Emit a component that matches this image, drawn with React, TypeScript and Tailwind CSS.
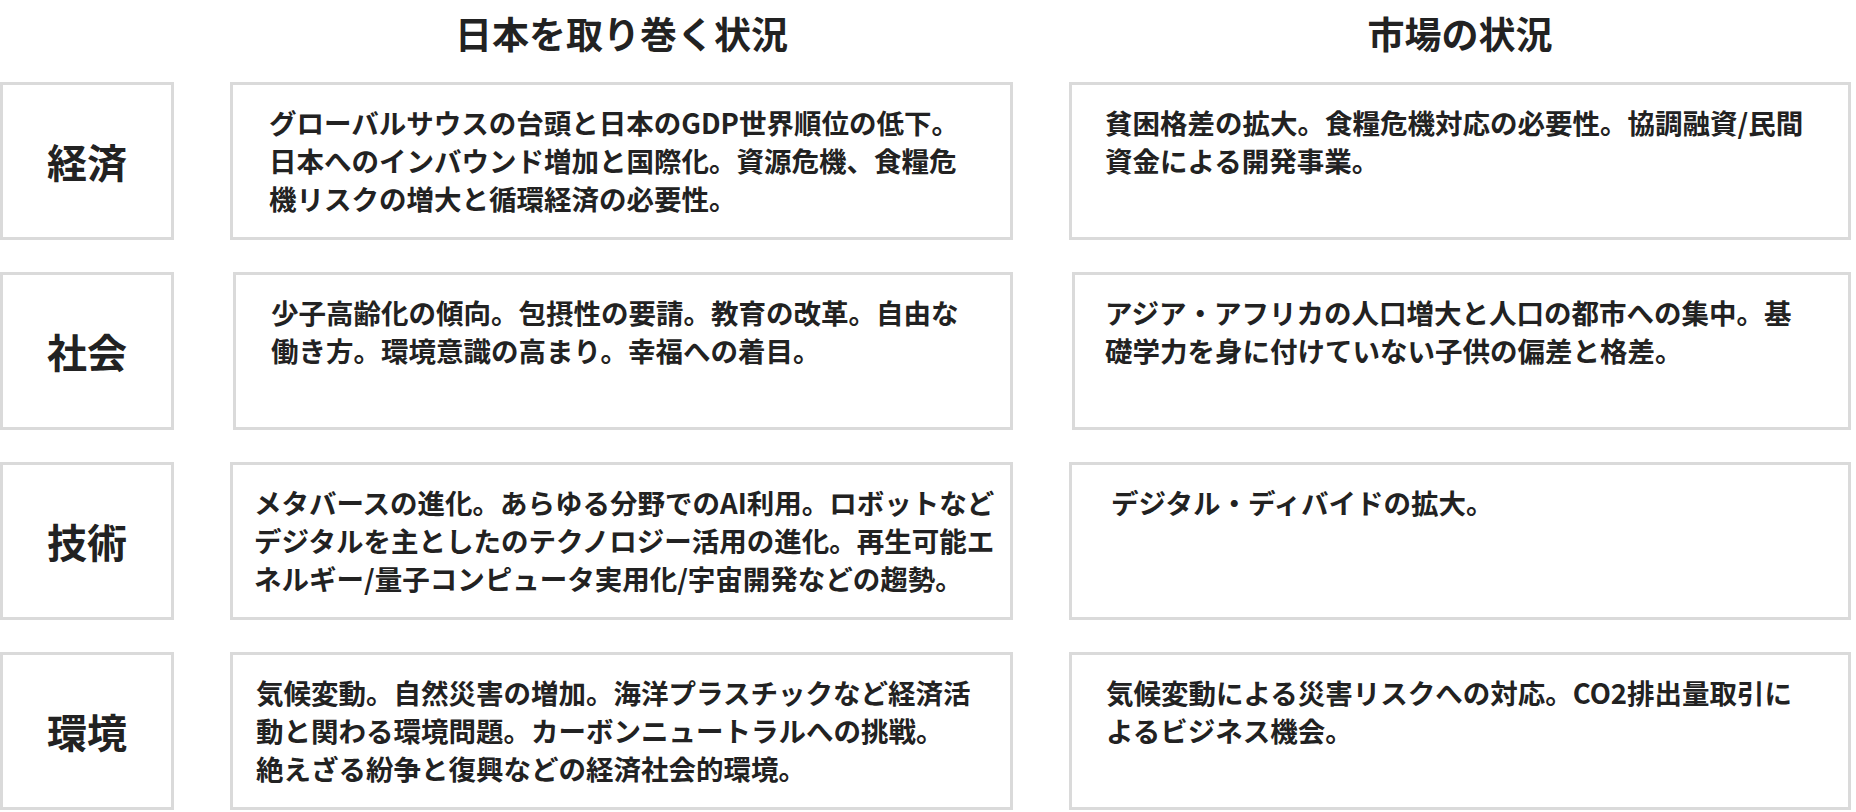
type Cell = {
  lines: string[];
  pad: string;
};

type Row = {
  label: string;
  shift: string;
  japan: Cell;
  market: Cell;
};

const rows: Row[] = [
  {
    label: '経済',
    shift: '',
    japan: {
      lines: [
        'グローバルサウスの台頭と日本のGDP世界順位の低下。',
        '日本へのインバウンド増加と国際化。資源危機、食糧危',
        '機リスクの増大と循環経済の必要性。',
      ],
      pad: 'pl-[36px]',
    },
    market: {
      lines: ['貧困格差の拡大。食糧危機対応の必要性。協調融資/民間', '資金による開発事業。'],
      pad: 'pl-[33px]',
    },
  },
  {
    label: '社会',
    shift: 'ml-[3px]',
    japan: {
      lines: ['少子高齢化の傾向。包摂性の要請。教育の改革。自由な', '働き方。環境意識の高まり。幸福への着目。'],
      pad: 'pl-[35px]',
    },
    market: {
      lines: ['アジア・アフリカの人口増大と人口の都市への集中。基', '礎学力を身に付けていない子供の偏差と格差。'],
      pad: 'pl-[30px]',
    },
  },
  {
    label: '技術',
    shift: '',
    japan: {
      lines: [
        'メタバースの進化。あらゆる分野でのAI利用。ロボットなど',
        'デジタルを主としたのテクノロジー活用の進化。再生可能エ',
        'ネルギー/量子コンピュータ実用化/宇宙開発などの趨勢。',
      ],
      pad: 'pl-[21px]',
    },
    market: {
      lines: ['デジタル・ディバイドの拡大。'],
      pad: 'pl-[39px]',
    },
  },
  {
    label: '環境',
    shift: '',
    japan: {
      lines: [
        '気候変動。自然災害の増加。海洋プラスチックなど経済活',
        '動と関わる環境問題。カーボンニュートラルへの挑戦。',
        '絶えざる紛争と復興などの経済社会的環境。',
      ],
      pad: 'pl-[23px]',
    },
    market: {
      lines: ['気候変動による災害リスクへの対応。CO2排出量取引に', 'よるビジネス機会。'],
      pad: 'pl-[34px]',
    },
  },
];

function TextBox({ cell, shift }: { cell: Cell; shift: string }) {
  return (
    <div className={`h-[158px] border-[3px] border-[#dadada] bg-white pt-[18px] ${cell.pad} ${shift}`}>
      {cell.lines.map((line, i) => (
        <p key={i} className="whitespace-nowrap text-[27.5px] font-bold leading-[38px]">
          {line}
        </p>
      ))}
    </div>
  );
}

export default function App() {
  return (
    <div className="min-h-screen bg-white pr-[5px] font-['Noto_Sans_CJK_JP','Noto_Sans',sans-serif] text-[#222]">
      <div className="grid grid-cols-[174px_783px_1fr] gap-x-[56px]">
        {/* Header */}
        <div className="h-[82px]" />
        <h2 className="h-[82px] pt-[9px] text-center text-[37px] font-bold leading-[48px]">日本を取り巻く状況</h2>
        <h2 className="h-[82px] pt-[9px] text-center text-[37px] font-bold leading-[48px]">市場の状況</h2>
      </div>

      {/* Rows */}
      <div className="flex flex-col gap-y-[32px]">
        {rows.map((row) => (
          <div key={row.label} className="grid grid-cols-[174px_783px_1fr] gap-x-[56px]">
            <div className="flex h-[158px] items-center justify-center border-[3px] border-[#dadada] text-[40px] font-bold">
              {row.label}
            </div>
            <TextBox cell={row.japan} shift={row.shift} />
            <TextBox cell={row.market} shift={row.shift} />
          </div>
        ))}
      </div>
    </div>
  );
}
